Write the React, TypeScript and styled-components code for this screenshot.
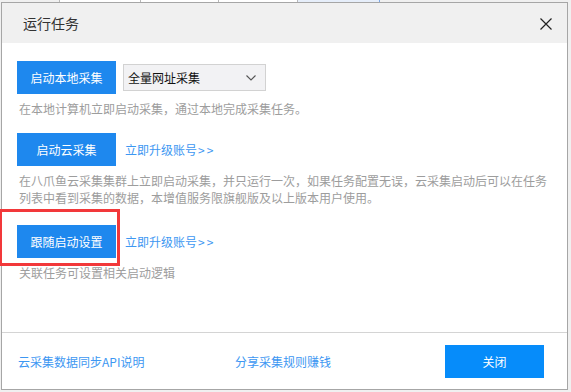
import React from 'react'
import styled, { createGlobalStyle } from 'styled-components'

const GlobalStyle = createGlobalStyle`
  html, body {
    margin: 0;
    padding: 0;
    background: #f0f0f0;
  }
  body {
    font-family: "Noto Sans CJK SC", "Noto Sans", sans-serif;
    font-size: 12px;
  }
  * { box-sizing: border-box; }
`

interface Cell {
  width: number
  tone: 'grey' | 'white' | 'blue'
}

const strip: Cell[] = [
  { width: 60, tone: 'grey' },
  { width: 81, tone: 'white' },
  { width: 78, tone: 'white' },
  { width: 79, tone: 'white' },
  { width: 82, tone: 'blue' },
]

const tasks = [
  {
    label: '启动云采集',
    link: true,
    desc: '在八爪鱼云采集集群上立即启动采集，并只运行一次，如果任务配置无误，云采集启动后可以在任务列表中看到采集的数据，本增值服务限旗舰版及以上版本用户使用。',
  },
]

export default function App() {
  return (
    <Page>
      <GlobalStyle />
      <Strip>
        {strip.map((c, i) => (
          <StripCell key={i} $w={c.width} $tone={c.tone} />
        ))}
      </Strip>
      <Dialog>
        <Header>
          <Title>运行任务</Title>
          <CloseIcon width="12" height="12" viewBox="0 0 12 12">
            <path d="M0.5 0.5 L11.5 11.5 M11.5 0.5 L0.5 11.5" stroke="#222" strokeWidth="1.2" />
          </CloseIcon>
        </Header>
        <Body>
          <Section $top={18}>
            <Row>
              <PrimaryButton>启动本地采集</PrimaryButton>
              <Select>
                <span>全量网址采集</span>
                <svg width="10" height="6" viewBox="0 0 10 6">
                  <path d="M0.5 0.5 L5 5 L9.5 0.5" fill="none" stroke="#555" strokeWidth="1.1" />
                </svg>
              </Select>
            </Row>
            <Desc>在本地计算机立即启动采集，通过本地完成采集任务。</Desc>
          </Section>
          {tasks.map((t) => (
            <Section key={t.label} $top={16}>
              <Row>
                <PrimaryButton>{t.label}</PrimaryButton>
                <UpgradeLink>
                  立即升级账号<Arrows>&gt;&gt;</Arrows>
                </UpgradeLink>
              </Row>
              <Desc>{t.desc}</Desc>
            </Section>
          ))}
          <Section $top={19}>
            <Row>
              <Highlight />
              <PrimaryButton>跟随启动设置</PrimaryButton>
              <UpgradeLink>
                立即升级账号<Arrows>&gt;&gt;</Arrows>
              </UpgradeLink>
            </Row>
            <Desc>关联任务可设置相关启动逻辑</Desc>
          </Section>
        </Body>
        <Footer>
          <FooterLink>云采集数据同步API说明</FooterLink>
          <FooterLink>分享采集规则赚钱</FooterLink>
          <CloseButton>关闭</CloseButton>
        </Footer>
      </Dialog>
    </Page>
  )
}

const Page = styled.div`
  width: 571px;
  height: 392px;
  overflow: hidden;
`

const Strip = styled.div`
  display: flex;
  height: 2px;
`

const StripCell = styled.div<{ $w: number; $tone: 'grey' | 'white' | 'blue' }>`
  width: ${(p) => p.$w}px;
  background: ${(p) => (p.$tone === 'blue' ? '#e6eefa' : p.$tone === 'white' ? '#fff' : '#f0f0f0')};
  border-right: 1px solid ${(p) => (p.$tone === 'blue' ? '#7aa6e6' : '#b8b8b8')};
`

const Dialog = styled.div`
  position: relative;
  margin-left: 1px;
  width: 567px;
  height: 388px;
  background: #fff;
  border: 1px solid #a6a6a6;
  display: flex;
  flex-direction: column;
`

const Header = styled.div`
  height: 40px;
  background: #f0f0f0;
  display: flex;
  align-items: center;
  justify-content: space-between;
  padding: 0 15px 0 21px;
`

const Title = styled.div`
  font-size: 14px;
  color: #333;
`

const CloseIcon = styled.svg`
  display: block;
  margin-top: 1px;
`

const Body = styled.div`
  flex: 1;
  padding: 0 16px 0 15px;
`

const Section = styled.div<{ $top: number }>`
  margin-top: ${(p) => p.$top}px;
`

const Row = styled.div`
  position: relative;
  display: flex;
  align-items: center;
  gap: 7px;
`

const PrimaryButton = styled.button`
  width: 99px;
  height: 33px;
  border: none;
  background: #1e88ee;
  color: #fff;
  font-family: inherit;
  font-size: 12px;
  padding: 0;
  cursor: pointer;
`

const Select = styled.div`
  width: 143px;
  height: 27px;
  background: #f2f2f4;
  border: 1px solid #d2d2d2;
  display: flex;
  align-items: center;
  justify-content: space-between;
  padding: 0 9px 0 4px;
  color: #111;
  font-weight: 400;
  svg { display: block; }
`

const UpgradeLink = styled.a`
  margin-left: 2px;
  color: #3d97f2;
  font-size: 12px;
  cursor: pointer;
`

const Arrows = styled.span`
  letter-spacing: 2px;
  margin-left: 1px;
`

const Highlight = styled.div`
  position: absolute;
  left: -18px;
  top: -16px;
  width: 121px;
  height: 57px;
  border: 3px solid #f2383a;
  pointer-events: none;
`

const Desc = styled.p`
  margin: 6px 0 0 2px;
  color: #9d9d9d;
  font-size: 12px;
  line-height: 17px;
`

const Footer = styled.div`
  height: 57px;
  border-top: 1px solid #d4d4d4;
  display: grid;
  grid-template-columns: 217px 1fr auto;
  align-items: center;
  padding: 0 23px 0 16px;
`

const FooterLink = styled.a`
  color: #3d97f2;
  font-size: 12px;
  cursor: pointer;
`

const CloseButton = styled.button`
  width: 99px;
  height: 33px;
  border: none;
  background: #068cfa;
  color: #fff;
  font-family: inherit;
  font-size: 12px;
  padding: 0;
  cursor: pointer;
`
